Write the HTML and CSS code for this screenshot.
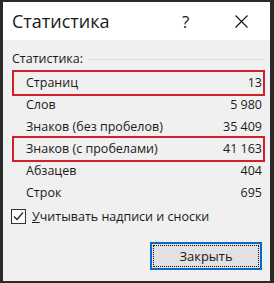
FILE: index.html
```html
<!DOCTYPE html>
<html lang="ru">
<head>
    <meta charset="UTF-8">
    <title>Статистика</title>
    <link rel="stylesheet" href="styles.css">
</head>
<body>
    <div class="dialog">
        <div class="titlebar">
            <span class="title">Статистика</span>
            <span class="help">?</span>
            <svg class="close" width="13" height="13" viewBox="0 0 13 13">
                <path d="M0.5 0.5 L12.5 12.5 M12.5 0.5 L0.5 12.5" stroke="#111" stroke-width="1.1" fill="none"/>
            </svg>
        </div>
        <div class="content">
            <div class="group-label">
                <span>Статистика:</span>
                <div class="group-line"></div>
            </div>
            <div class="stats">
                <div class="row marked"><span>Страниц</span><span>13</span></div>
                <div class="row"><span>Слов</span><span>5 980</span></div>
                <div class="row"><span>Знаков (без пробелов)</span><span>35 409</span></div>
                <div class="row marked"><span>Знаков (с пробелами)</span><span>41 163</span></div>
                <div class="row"><span>Абзацев</span><span>404</span></div>
                <div class="row"><span>Строк</span><span>695</span></div>
            </div>
            <label class="check">
                <span class="box">
                    <svg width="13" height="13" viewBox="0 0 13 13">
                        <path d="M2 6.5 L5 9.5 L11 2.5" stroke="#222" stroke-width="1.2" fill="none"/>
                    </svg>
                </span>
                <span><u>У</u>читывать надписи и сноски</span>
            </label>
            <div class="buttons">
                <button class="button">Закрыть</button>
            </div>
        </div>
    </div>
</body>
</html>
```

FILE: styles.css
```css
body {
    margin: 0;
    background-color: #2a2a2a;
    font-family: "Open Sans", "Noto Sans", sans-serif;
    color: #1a1a1a;
}
.dialog {
    margin: 2px 4px 2px 3px;
    height: 279px;
    background-color: #f0f0f0;
    display: flex;
    flex-direction: column;
}
.titlebar {
    height: 38px;
    background-color: #ffffff;
    display: flex;
    align-items: center;
    padding: 0 0 0 9px;
}
.title {
    font-size: 18px;
    flex: 1;
}
.help {
    font-size: 17px;
    width: 53px;
}
.close {
    margin-right: 22px;
}
.content {
    padding: 9px 7px 0 11px;
    font-size: 12.5px;
}
.group-label {
    display: flex;
    align-items: center;
    gap: 5px;
    height: 18px;
    margin-left: -2px;
}
.group-line {
    flex: 1;
    border-top: 1px solid #dcdcdc;
    margin-top: 3px;
}
.stats {
    margin-top: 5px;
}
.row {
    display: flex;
    justify-content: space-between;
    height: 22px;
    line-height: 22px;
    padding: 0 1px 0 12px;
}
.row.marked {
    outline: 2px solid #d2202a;
}
.check {
    display: flex;
    align-items: center;
    gap: 6px;
    margin: 3px 0 0 -3px;
    height: 18px;
}
.box {
    width: 13px;
    height: 13px;
    border: 1px solid #333;
    background-color: #fff;
    display: flex;
}
.buttons {
    display: flex;
    justify-content: flex-end;
    margin-top: 17px;
    padding-right: 1px;
}
.button {
    width: 112px;
    height: 28px;
    border: 2px solid #0a68c9;
    background-color: #e1e1e1;
    font-family: inherit;
    font-size: 13px;
    color: #1a1a1a;
    outline: 1px dotted #111;
    outline-offset: -4px;
}
```
